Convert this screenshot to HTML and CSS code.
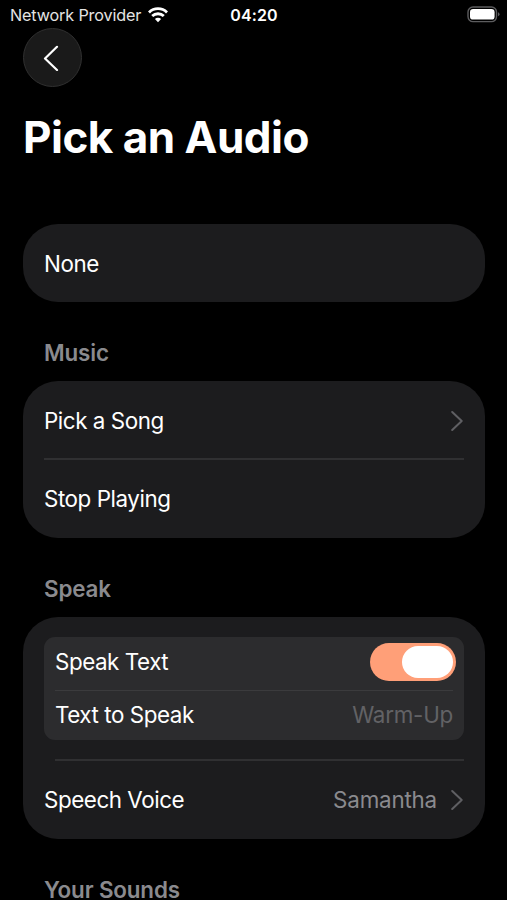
FILE: index.html
```html
<!DOCTYPE html>
<html lang="en">
<head>
  <meta charset="UTF-8">
  <title>Pick an Audio</title>
  <meta name="viewport" content="width=device-width, initial-scale=1.0">
  <link rel="stylesheet" href="styles.css">
</head>
<body>
  <div class="status-bar">
    <div class="carrier">
      <span class="carrier-name">Network Provider</span>
      <svg class="wifi" width="20" height="16" viewBox="0 0 20 16" fill="none" stroke="#fff" stroke-width="2.8">
        <path d="M1 5.4A12.8 12.8 0 0 1 19 5.4"/>
        <path d="M4.2 9.1A8.3 8.3 0 0 1 15.8 9.1"/>
        <path d="M10 15.2L6.9 12.1A4.4 4.4 0 0 1 13.1 12.1Z" fill="#fff" stroke="none"/>
      </svg>
    </div>
    <span class="time">04:20</span>
    <svg class="battery" width="33" height="17" viewBox="0 0 33 17">
      <rect x="1" y="1" width="28.5" height="14.6" rx="5" fill="none" stroke="#5c5c5e" stroke-width="1.4"/>
      <rect x="3" y="3" width="24.6" height="10.6" rx="3.2" fill="#fff"/>
      <path d="M31 6.3Q32.5 7 32.5 8.3T31 10.3Z" fill="#5c5c5e"/>
    </svg>
  </div>

  <button class="back-btn" aria-label="Back">
    <svg width="16" height="26" viewBox="0 0 16 26" fill="none" stroke="#fff" stroke-width="2.2" stroke-linecap="round" stroke-linejoin="round">
      <path d="M14 1.8L2 13.5L14 25"/>
    </svg>
  </button>

  <h1>Pick an Audio</h1>

  <div class="card">
    <div class="row"><span>None</span></div>
  </div>

  <h2>Music</h2>
  <div class="card">
    <div class="row song-row">
      <span>Pick a Song</span>
      <svg class="chevron" width="13" height="22" viewBox="0 0 13 22"><path d="M1.2 2L10.7 11L1.2 20"/></svg>
    </div>
    <div class="row divided"><span>Stop Playing</span></div>
  </div>

  <h2>Speak</h2>
  <div class="card speak-card">
    <div class="group">
      <div class="group-row">
        <span>Speak Text</span>
        <div class="toggle"><div class="knob"></div></div>
      </div>
      <div class="group-row group-input">
        <span>Text to Speak</span>
        <span class="placeholder">Warm-Up</span>
      </div>
    </div>
    <div class="row voice-row">
      <span>Speech Voice</span>
      <span class="value">Samantha</span>
      <svg class="chevron" width="13" height="22" viewBox="0 0 13 22"><path d="M1.2 2L10.7 11L1.2 20"/></svg>
    </div>
  </div>

  <h2>Your Sounds</h2>
</body>
</html>
```

FILE: styles.css
```css
:root {
  --card: #1c1c1e;
  --group: #2c2c2e;
  --line: #303032;
  --gray: #8a8a8e;
  --accent: #ff9f78;
}

* {
  box-sizing: border-box;
}

body {
  height: 900px;
  margin: 0;
  padding: 0 22px 0 23px;
  overflow: hidden;
  background-color: #000;
  color: #fff;
  font-family: Inter, "Liberation Sans", sans-serif;
  font-size: 22.4px;
  line-height: 28px;
  letter-spacing: -0.45px;
}

.status-bar {
  display: grid;
  grid-template-columns: 1fr auto 1fr;
  align-items: center;
  height: 28px;
  margin: 0 -15px 0 -13px;
  font-size: 16px;
}

.carrier {
  display: flex;
  align-items: center;
  gap: 7px;
}

.carrier-name {
  margin-top: 1px;
  color: #e4e4e4;
  font-size: 16.2px;
  letter-spacing: -0.15px;
}

.time {
  margin: 1px 2px 0 0;
  font-weight: 600;
  letter-spacing: 0.1px;
}

.battery {
  justify-self: end;
}

.back-btn {
  display: flex;
  align-items: center;
  justify-content: center;
  width: 59px;
  height: 59px;
  padding: 0 4px 0 0;
  border: 1px solid #303030;
  border-radius: 50%;
  background-color: #1a1a1a;
}

h1 {
  margin: 22px 0 59px;
  font-size: 44px;
  font-weight: 700;
  line-height: 56px;
  letter-spacing: -0.5px;
}

h2 {
  margin: 37px 21px 14px;
  color: var(--gray);
  font-size: 22.4px;
  font-weight: 560;
  line-height: 28px;
  letter-spacing: -0.15px;
}

.card {
  padding: 0 21px;
  border-radius: 35px;
  background-color: var(--card);
}

.row {
  display: flex;
  align-items: center;
  justify-content: space-between;
  height: 78px;
  padding-top: 1px;
}

.song-row {
  height: 77px;
  padding-top: 2px;
}

.divided {
  height: 80px;
  padding-top: 0;
  border-top: 2px solid var(--line);
}

.chevron {
  fill: none;
  stroke: #5f5f63;
  stroke-width: 2;
  stroke-linecap: round;
  stroke-linejoin: round;
}

.speak-card {
  padding-top: 20px;
}

.group {
  padding: 0 11px;
  border-radius: 11px;
  background-color: var(--group);
}

.group-row {
  display: flex;
  align-items: center;
  justify-content: space-between;
  height: 53px;
  padding-bottom: 3px;
}

.group-input {
  height: 50px;
  padding-bottom: 2px;
  border-top: 1px solid #3b3b3d;
}

.placeholder {
  color: #626265;
  letter-spacing: -0.25px;
}

.toggle {
  display: flex;
  justify-content: flex-end;
  width: 86px;
  height: 38px;
  margin-right: -3px;
  padding: 3px;
  border-radius: 19px;
  background-color: var(--accent);
}

.knob {
  width: 51px;
  height: 32px;
  border-radius: 16px;
  background-color: #fff;
}

.voice-row {
  gap: 14px;
  height: 80px;
  margin-top: 19px;
  padding-top: 2px;
  /* separator starts at the group's text, not the card's */
  background: linear-gradient(var(--line), var(--line)) 11px 0 / 100% 2px no-repeat;
}

.value {
  margin-left: auto;
  color: var(--gray);
  letter-spacing: -0.2px;
}
```
